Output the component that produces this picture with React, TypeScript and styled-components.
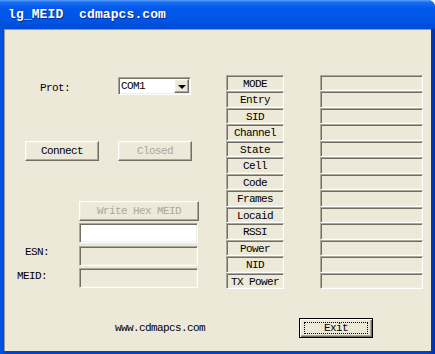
import React from 'react';
import styled, { css, createGlobalStyle } from 'styled-components';

const FACE = '#ECE9D8';
const MONO = `"Liberation Mono", "DejaVu Sans Mono", monospace`;

const GlobalStyle = createGlobalStyle`
  html, body { margin: 0; padding: 0; background: #fff; }
  * { box-sizing: border-box; }
`;

const FIELDS = [
  'MODE', 'Entry', 'SID', 'Channel', 'State', 'Cell', 'Code',
  'Frames', 'Locaid', 'RSSI', 'Power', 'NID', 'TX Power',
];

const sunken = css`
  border: 1px solid;
  border-color: #aca899 #fff #fff #aca899;
  box-shadow: inset 1px 1px 0 #716f64, inset -1px -1px 0 #f1efe2;
`;

const raised = css`
  border: 1px solid;
  border-color: #fff #716f64 #716f64 #fff;
  box-shadow: inset -1px -1px 0 #aca899, inset 1px 1px 0 #f1efe2;
`;

const Window = styled.div`
  width: 435px;
  height: 354px;
  display: flex;
  flex-direction: column;
  background: #0041d0;
  border-top-right-radius: 7px;
  overflow: hidden;
  font-family: ${MONO};
`;

const TitleBar = styled.div`
  height: 29px;
  flex: none;
  display: flex;
  align-items: center;
  padding-left: 8px;
  background: linear-gradient(to bottom, #5aa2ff 0%, #1a6cf0 8%, #0058ea 30%, #0054e3 75%, #0048d8 100%);
  color: #fff;
  font-family: ${MONO};
  font-weight: bold;
  font-size: 13px;
  letter-spacing: 0.1px;
  white-space: pre;
  text-shadow: 1px 1px 0 #0a2f8a;
`;

const Frame = styled.div`
  flex: 1;
  display: flex;
  padding: 0 4px 3px 4px;
  background: linear-gradient(to right, #0055e5 0, #0050df 3px, #0041d0 6px, #0041d0 calc(100% - 6px), #002fb0 100%);
`;

const Client = styled.div`
  flex: 1;
  display: flex;
  flex-direction: column;
  background: ${FACE};
  padding-top: 46px;
  box-shadow: inset 1px 1px 0 #9a9a92;
  font-size: 11px;
  letter-spacing: -0.6px;
  color: #000;
`;

const Main = styled.div`
  display: flex;
`;

const LeftCol = styled.div`
  width: 222px;
  display: flex;
  flex-direction: column;
`;

const Row = styled.div<{ $top: number; $indent?: number; $h?: number }>`
  display: flex;
  align-items: center;
  height: ${p => p.$h ?? 20}px;
  margin-top: ${p => p.$top}px;
  padding-left: ${p => p.$indent ?? 0}px;
`;

const Label = styled.div<{ $w: number; $dy?: number }>`
  width: ${p => p.$w}px;
  flex: none;
  position: relative;
  top: ${p => p.$dy ?? 0}px;
`;

const Combo = styled.div`
  ${sunken};
  width: 73px;
  height: 18px;
  background: #fff;
  display: flex;
  align-items: center;
  padding: 0 1px 0 2px;
`;

const ComboText = styled.div`
  flex: 1;
`;

const DropButton = styled.div`
  ${raised};
  width: 15px;
  height: 14px;
  display: flex;
  align-items: center;
  justify-content: center;
  background: ${FACE};
`;

const Arrow = styled.div`
  width: 0;
  height: 0;
  border-left: 4px solid transparent;
  border-right: 4px solid transparent;
  border-top: 4px solid #000;
  margin-top: 1px;
`;

const Button = styled.div<{ $w: number; $disabled?: boolean; $default?: boolean }>`
  ${raised};
  width: ${p => p.$w}px;
  height: 20px;
  flex: none;
  display: flex;
  align-items: center;
  justify-content: center;
  background: ${FACE};
  color: ${p => (p.$disabled ? '#aca899' : '#000')};
  position: relative;
  ${p => p.$default && css`
    border: 1px solid #000;
    box-shadow: inset 1px 1px 0 #fff, inset -1px -1px 0 #716f64, inset -2px -2px 0 #aca899;
  `}
`;

const FocusRing = styled.div`
  position: absolute;
  inset: 3px 4px 3px 4px;
  border: 1px dotted #000;
`;

const ButtonRow = styled.div`
  display: flex;
  gap: 19px;
  height: 20px;
  margin-top: 46px;
  padding-left: 21px;
`;

const Edit = styled.div<{ $white?: boolean }>`
  ${sunken};
  width: 119px;
  height: 20px;
  flex: none;
  background: ${p => (p.$white ? '#fff' : FACE)};
`;

const Grid = styled.div`
  display: grid;
  grid-template-columns: 58px 103px;
  grid-template-rows: repeat(6, 16px 17px) 16px;
  column-gap: 36px;
`;

const Cell = styled.div`
  ${sunken};
  display: flex;
  align-items: center;
  justify-content: center;
  padding-top: 1px;
`;

const Footer = styled.div`
  display: flex;
  align-items: center;
  height: 20px;
  margin-top: 29px;
  padding-left: 111px;
`;

const Site = styled.div`
  width: 184px;
`;

export default function App() {
  return (
    <>
      <GlobalStyle />
      <Window>
        <TitleBar>lg_MEID  cdmapcs.com</TitleBar>
        <Frame>
          <Client>
            <Main>
              <LeftCol>
                <Row $top={2} $indent={36} $h={18}>
                  <Label $w={78} $dy={2}>Prot:</Label>
                  <Combo>
                    <ComboText>COM1</ComboText>
                    <DropButton><Arrow /></DropButton>
                  </Combo>
                </Row>
                <ButtonRow>
                  <Button $w={74}>Connect</Button>
                  <Button $w={74} $disabled>Closed</Button>
                </ButtonRow>
                <Row $top={40} $indent={75}>
                  <Button $w={120} $disabled>Write Hex MEID</Button>
                </Row>
                <Row $top={2} $indent={75}>
                  <Edit $white />
                </Row>
                <Row $top={3} $indent={21}>
                  <Label $w={54} $dy={-4}>ESN:</Label>
                  <Edit />
                </Row>
                <Row $top={2} $indent={13}>
                  <Label $w={62} $dy={-2}>MEID:</Label>
                  <Edit />
                </Row>
              </LeftCol>
              <Grid>
                {FIELDS.map(f => (
                  <React.Fragment key={f}>
                    <Cell>{f}</Cell>
                    <Cell />
                  </React.Fragment>
                ))}
              </Grid>
            </Main>
            <Footer>
              <Site>www.cdmapcs.com</Site>
              <Button $w={74} $default>
                Exit
                <FocusRing />
              </Button>
            </Footer>
          </Client>
        </Frame>
      </Window>
    </>
  );
}
